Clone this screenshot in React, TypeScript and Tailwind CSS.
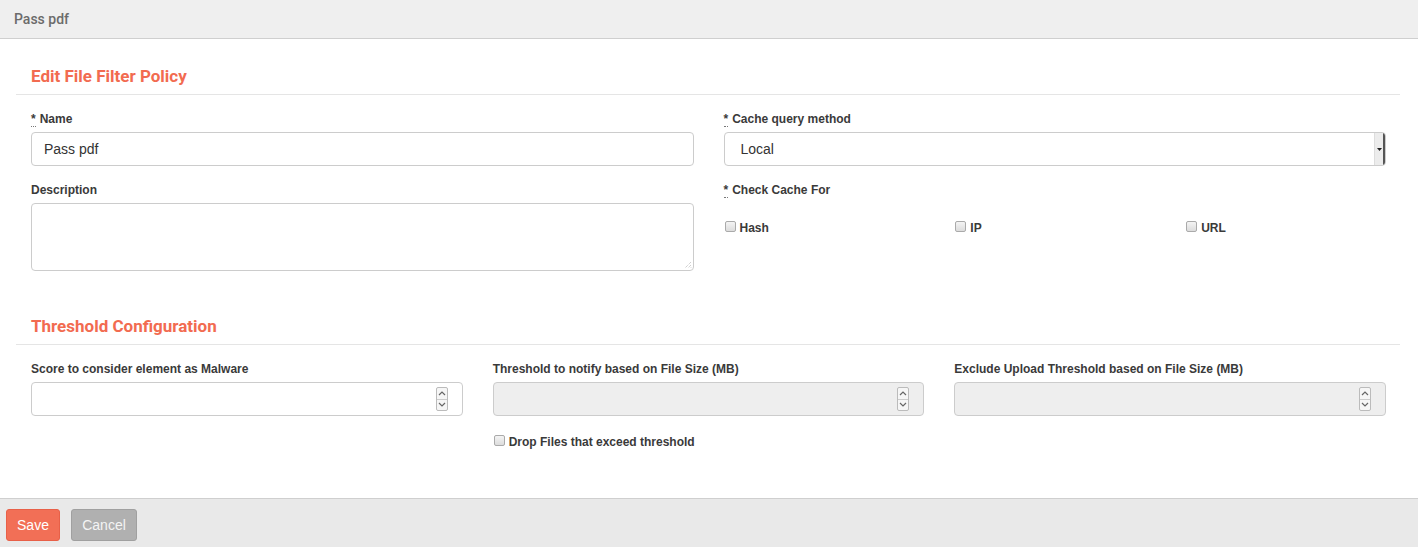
import React from 'react';

const Req: React.FC = () => (
  <abbr className="no-underline border-b border-dotted border-[#777] mr-1 cursor-help">*</abbr>
);

const Label: React.FC<{ text: string; req?: boolean }> = ({ text, req }) => (
  <label className="block text-[12px] font-bold text-[#3a3a3a] leading-[17px] mb-[4px]">
    {req && <Req />}
    {text}
  </label>
);

const Check: React.FC<{ label: string }> = ({ label }) => (
  <div className="flex items-center gap-[4px] pl-[1px] text-[12px] font-bold text-[#3a3a3a]">
    <span className="inline-block w-[11px] h-[11px] rounded-[2px] border border-[#aaa] bg-gradient-to-b from-[#f4f4f4] to-[#dcdcdc] -mt-[3px]" />
    <span>{label}</span>
  </div>
);

const Spinner: React.FC = () => (
  <div className="absolute right-[14px] top-[4px] w-[12px] h-[24px] flex flex-col border border-[#bbb] rounded-[2px] bg-[#f6f6f6]">
    <div className="flex-1 flex items-center justify-center border-b border-[#ccc]">
      <svg width="8" height="5" viewBox="0 0 8 5"><path d="M1 4 L4 1 L7 4" fill="none" stroke="#666" strokeWidth="1.2" /></svg>
    </div>
    <div className="flex-1 flex items-center justify-center">
      <svg width="8" height="5" viewBox="0 0 8 5"><path d="M1 1 L4 4 L7 1" fill="none" stroke="#666" strokeWidth="1.2" /></svg>
    </div>
  </div>
);

const NumberBox: React.FC<{ disabled?: boolean }> = ({ disabled }) => (
  <div className={`relative h-[34px] rounded-[4px] border border-[#ccc] ${disabled ? 'bg-[#eeeeee]' : 'bg-white'}`}>
    <Spinner />
  </div>
);

const SectionTitle: React.FC<{ text: string }> = ({ text }) => (
  <div className="px-[15px] pb-[7px] border-b border-[#e5e5e5]">
    <h3 className="font-['Roboto',sans-serif] font-bold text-[17px] text-[#f26b50] leading-[22px]">{text}</h3>
  </div>
);

export default function App() {
  return (
    <div className="w-[1418px] h-[547px] flex flex-col bg-white font-['Liberation_Sans',Arial,sans-serif] text-[#333]">
      <div className="h-[39px] shrink-0 bg-[#efefef] border-b border-[#cfcfcf] flex items-center px-[14px]">
        <span className="font-['Roboto',sans-serif] font-medium text-[14px] text-[#6b6b6b]">Pass pdf</span>
      </div>

      <div className="flex-1 pl-[16px] pt-[26px] pr-[18px]">
        <SectionTitle text="Edit File Filter Policy" />
        <div className="pl-[15px] pr-[14px] pt-[16px] grid grid-cols-2 gap-x-[30px]">
          <div>
            <Label text="Name" req />
            <div className="h-[34px] rounded-[4px] border border-[#ccc] flex items-center px-[12px] text-[14px] text-[#333]">Pass pdf</div>
            <div className="mt-[16px]">
              <Label text="Description" />
              <div className="relative h-[68px] rounded-[4px] border border-[#ccc]">
                <svg className="absolute right-[1px] bottom-[1px]" width="8" height="8" viewBox="0 0 8 8">
                  <path d="M7 1 L1 7 M7 4 L4 7 M7 6.5 L6.5 7" stroke="#aaa" strokeWidth="0.8" strokeDasharray="1 1" />
                </svg>
              </div>
            </div>
          </div>
          <div>
            <Label text="Cache query method" req />
            <div className="h-[34px] rounded-[4px] border border-[#ccc] flex items-center text-[14px] text-[#333] overflow-hidden">
              <span className="flex-1 px-[16px]">Local</span>
              <span className="w-[11px] h-full bg-[#ececec] border-l border-[#ddd] border-r-2 border-r-[#555] flex items-center justify-center">
                <svg width="5" height="3" viewBox="0 0 5 3"><path d="M0 0 H5 L2.5 3 Z" fill="#222" /></svg>
              </span>
            </div>
            <div className="mt-[16px]">
              <Label text="Check Cache For" req />
              <div className="grid grid-cols-3 mr-[-30px] pt-[16px]">
                <Check label="Hash" />
                <Check label="IP" />
                <Check label="URL" />
              </div>
            </div>
          </div>
        </div>

        <div className="mt-[44px]">
          <SectionTitle text="Threshold Configuration" />
        </div>
        <div className="pl-[15px] pr-[14px] pt-[16px] grid grid-cols-3 gap-x-[30px]">
          <div>
            <Label text="Score to consider element as Malware" />
            <NumberBox />
          </div>
          <div>
            <Label text="Threshold to notify based on File Size (MB)" />
            <NumberBox disabled />
            <div className="mt-[17px]">
              <Check label="Drop Files that exceed threshold" />
            </div>
          </div>
          <div>
            <Label text="Exclude Upload Threshold based on File Size (MB)" />
            <NumberBox disabled />
          </div>
        </div>
      </div>

      <div className="h-[49px] shrink-0 bg-[#e9e9e9] border-t border-[#cfcfcf] flex items-start pt-[10px] gap-[11px] px-[6px]">
        <button className="h-[32px] w-[54px] rounded-[3px] bg-[#f26f56] border border-[#e86048] text-white text-[14px]">Save</button>
        <button className="h-[32px] w-[66px] rounded-[3px] bg-[#b0b0b0] border border-[#a0a0a0] text-[#f4f4f4] text-[14px]">Cancel</button>
      </div>
    </div>
  );
}
